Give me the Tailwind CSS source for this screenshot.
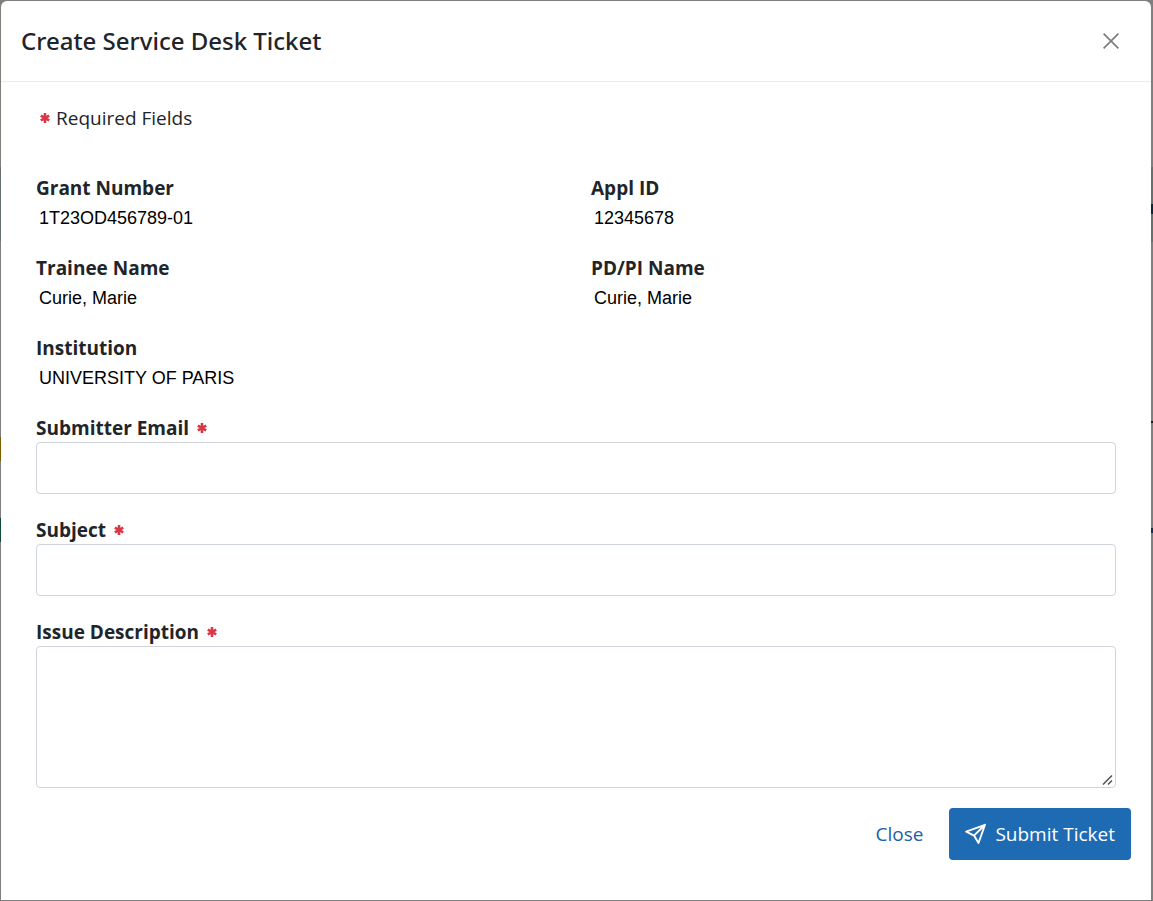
<!DOCTYPE html>
<html lang="en">
<head>
<meta charset="utf-8">
<meta name="viewport" content="width=device-width, initial-scale=1">
<title>Create Service Desk Ticket</title>
<script src="https://cdn.jsdelivr.net/npm/@tailwindcss/browser@4"></script>
</head>
<body class="flex min-h-screen bg-[#7f7f7f] pt-px pb-px font-['Open_Sans','Noto_Sans',sans-serif] text-[#212529]">
  <!-- Page edge showing beside the dialog -->
  <div class="flex w-px shrink-0 flex-col" aria-hidden="true">
    <div class="h-[166px] bg-[#807f7a]"></div>
    <div class="h-[74px] bg-[#66706d]"></div>
    <div class="h-[196px] bg-[#7f7f7f]"></div>
    <div class="h-[24px] bg-[#7f5c00]"></div>
    <div class="h-[57px] bg-[#7f7f7f]"></div>
    <div class="h-[24px] bg-[#0f4a33]"></div>
  </div>
  <div role="dialog" aria-labelledby="title" class="flex grow flex-col rounded-t-md bg-white">
    <header class="flex h-[81px] items-center justify-between border-b border-[#e9ecef] pr-7 pl-5">
      <h1 id="title" class="font-['Noto_Sans',sans-serif] text-2xl font-medium">Create Service Desk Ticket</h1>
      <button type="button" aria-label="Close dialog" class="p-1">
        <svg class="size-4" viewBox="0 0 16 16" fill="none" stroke="#7d7d7d" stroke-width="1.7"><path d="M.6.6 15.4 15.4M15.4.6.6 15.4"/></svg>
      </button>
    </header>
    <form class="px-[35px] pt-6 text-[19px] leading-6">
      <p class="flex items-center gap-1.5 pl-1">
        <svg class="size-2.5" viewBox="0 0 10 10" stroke="#dc3545" stroke-width="2.6"><path d="M5 0v10M.8 2.6l8.4 4.8M9.2 2.6.8 7.4"/></svg>
        Required Fields
      </p>
      <dl class="mt-[46px] grid grid-cols-2 gap-x-[30px] gap-y-6">
        <div><dt class="font-bold">Grant Number</dt><dd class="mt-1 pl-[3px] font-['Liberation_Sans',sans-serif] text-[18px] text-black leading-7">1T23OD456789-01</dd></div>
        <div><dt class="font-bold">Appl ID</dt><dd class="mt-1 pl-[3px] font-['Liberation_Sans',sans-serif] text-[18px] text-black leading-7">12345678</dd></div>
        <div><dt class="font-bold">Trainee Name</dt><dd class="mt-1 pl-[3px] font-['Liberation_Sans',sans-serif] text-[18px] text-black leading-7">Curie, Marie</dd></div>
        <div><dt class="font-bold">PD/PI Name</dt><dd class="mt-1 pl-[3px] font-['Liberation_Sans',sans-serif] text-[18px] text-black leading-7">Curie, Marie</dd></div>
        <div><dt class="font-bold">Institution</dt><dd class="mt-1 pl-[3px] font-['Liberation_Sans',sans-serif] text-[18px] text-black leading-7">UNIVERSITY OF PARIS</dd></div>
      </dl>
      <div class="mt-6">
        <label for="email" class="flex items-center gap-2 font-bold">Submitter Email
          <svg class="size-2.5" viewBox="0 0 10 10" stroke="#dc3545" stroke-width="2.6"><path d="M5 0v10M.8 2.6l8.4 4.8M9.2 2.6.8 7.4"/></svg>
        </label>
        <input id="email" type="email" required class="mt-0.5 block h-[52px] w-full rounded border border-[#ced4da] px-4">
      </div>
      <div class="mt-6">
        <label for="subject" class="flex items-center gap-2 font-bold">Subject
          <svg class="size-2.5" viewBox="0 0 10 10" stroke="#dc3545" stroke-width="2.6"><path d="M5 0v10M.8 2.6l8.4 4.8M9.2 2.6.8 7.4"/></svg>
        </label>
        <input id="subject" type="text" required class="mt-0.5 block h-[52px] w-full rounded border border-[#ced4da] px-4">
      </div>
      <div class="mt-6">
        <label for="issue" class="flex items-center gap-2 font-bold">Issue Description
          <svg class="size-2.5" viewBox="0 0 10 10" stroke="#dc3545" stroke-width="2.6"><path d="M5 0v10M.8 2.6l8.4 4.8M9.2 2.6.8 7.4"/></svg>
        </label>
        <div class="relative mt-0.5">
          <textarea id="issue" required class="block h-[142px] w-full resize-y rounded border border-[#ced4da] px-4 py-3"></textarea>
          <svg class="pointer-events-none absolute right-0.5 bottom-0.5 size-3 bg-white" viewBox="0 0 12 12" fill="none" stroke="#505050" stroke-width="1.5"><path d="M1 10.5 10 1.5M6 10.5l4-4"/></svg>
        </div>
      </div>
      <div class="-mr-[15px] mt-5 flex items-center justify-end gap-2.5">
        <button type="button" class="h-[52px] px-4 text-[#2060a8]">Close</button>
        <button type="submit" class="flex h-[52px] items-center gap-2 rounded bg-[#1f6bb3] px-4 text-white">
          <svg class="size-[22px]" viewBox="0 0 22 22" fill="none" stroke="currentColor" stroke-width="1.9" stroke-linejoin="round" stroke-linecap="round"><path d="M20 1.8 1.2 8.6 9 12.6 13.5 20zM20 1.8 9 12.6"/></svg>
          Submit Ticket
        </button>
      </div>
    </form>
  </div>
  <!-- Page edge to the right of the dialog -->
  <div class="flex w-0.5 shrink-0 flex-col" aria-hidden="true">
    <div class="h-[166px] bg-[#7f7f7f]"></div>
    <div class="h-[37px] bg-[#66706d]"></div>
    <div class="h-[10px] bg-[#062838]"></div>
    <div class="h-[28px] bg-[#66706d]"></div>
    <div class="h-[179px] bg-[#7f7f7f]"></div>
    <div class="h-0.5 bg-[#1a1a1a]"></div>
    <div class="h-[105px] bg-[#7f7f7f]"></div>
    <div class="h-[5px] bg-[#10304f]"></div>
  </div>
</body>
</html>
